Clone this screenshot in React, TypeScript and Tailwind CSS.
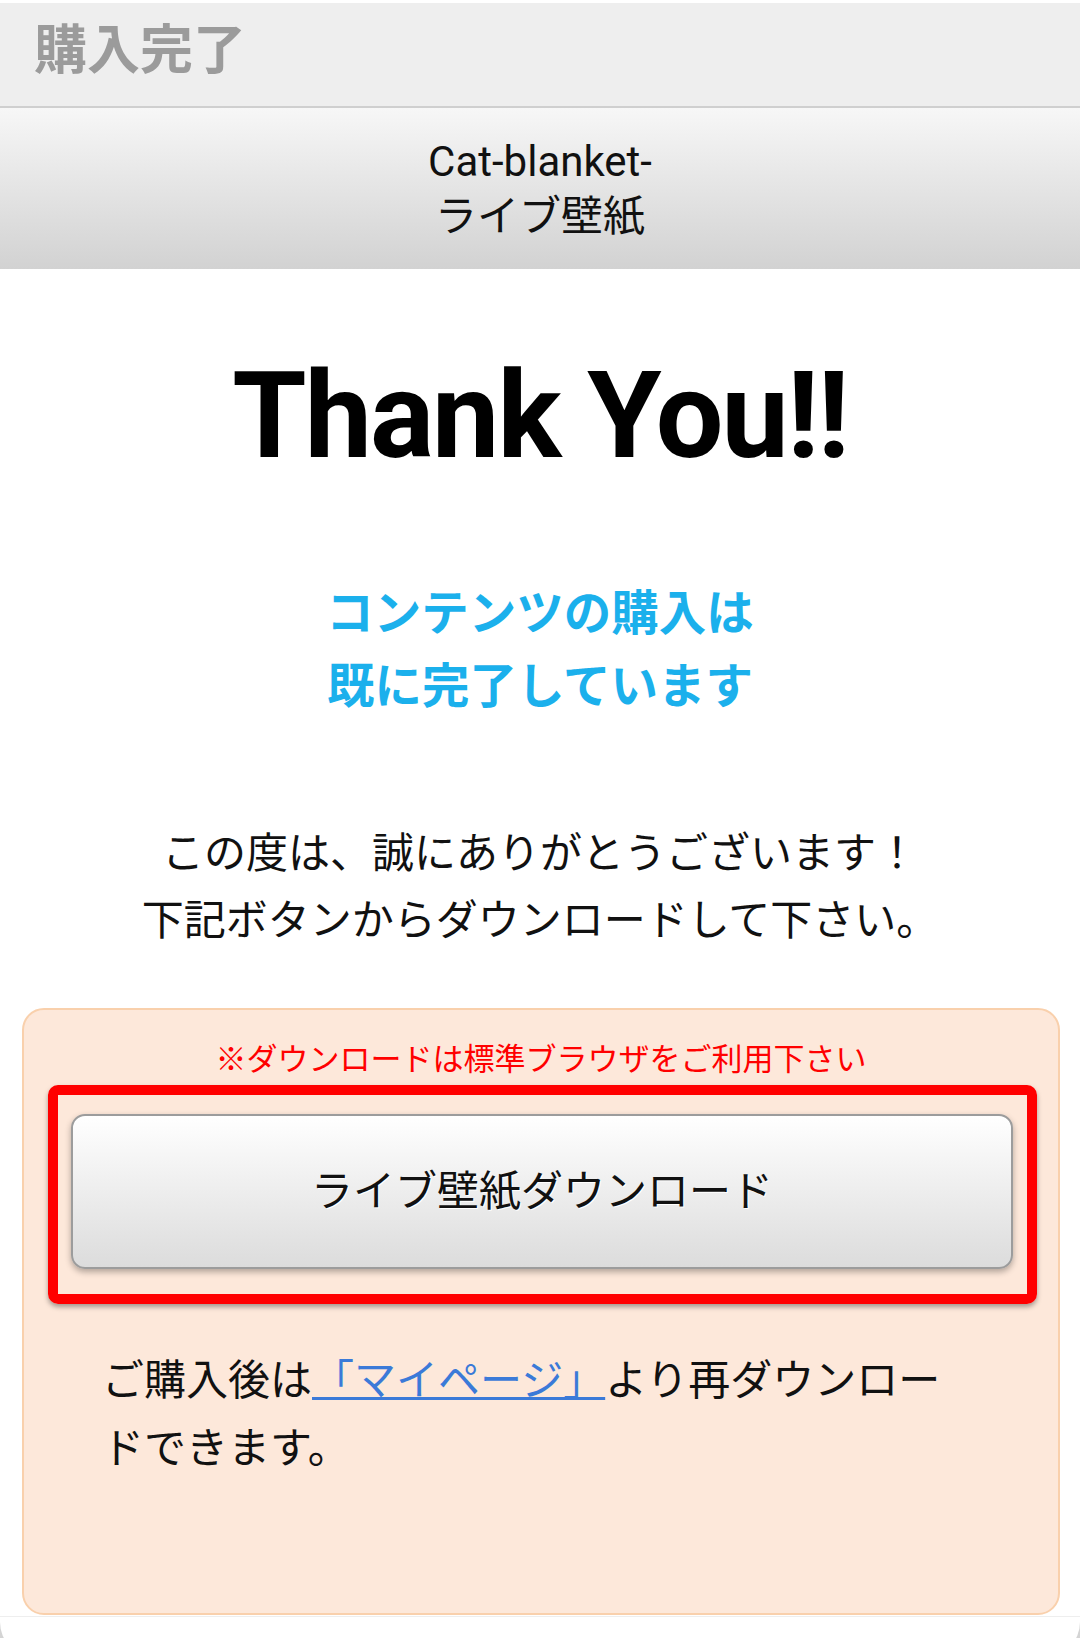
import React from "react";

function Header() {
  return (
    <div className="pt-[3px] bg-white">
      <div className="h-[105px] bg-[#eeeeee] flex items-center pl-[34px] pb-[6px] border-b-2 border-[#cfcfcf]">
        <h1 className="text-[53px] leading-none font-bold text-[#9b9b9b]">購入完了</h1>
      </div>
      <div className="h-[161px] bg-gradient-to-b from-[#f7f7f7] to-[#d2d2d2] flex flex-col items-center justify-center text-[42px] leading-[55px] text-[#111]">
        <p>Cat-blanket-</p>
        <p>ライブ壁紙</p>
      </div>
    </div>
  );
}

function DownloadBox() {
  return (
    <div className="ml-[22px] mr-[20px] mt-[54px] border-2 border-[#f9d0ac] bg-[#fde8da] rounded-[22px] pt-[27px] pb-[130px]">
      <p className="text-center text-[31px] leading-[45px] text-[#ff0000]">
        ※ダウンロードは標準ブラウザをご利用下さい
      </p>
      <div className="mt-[3px] ml-[24px] mr-[21px] border-[10px] border-[#ff0000] rounded-[10px] pt-[19px] pl-[13px] pr-[14px] pb-[25px] shadow-[0_3px_5px_rgba(0,0,0,0.35)]">
        <button className="w-full h-[155px] border-2 border-[#9c9c9c] rounded-[14px] bg-gradient-to-b from-white to-[#dcdcdc] shadow-[0_3px_6px_rgba(0,0,0,0.3)] text-[42px] text-[#111] [text-shadow:1px_1px_0_#fff]">
          ライブ壁紙ダウンロード
        </button>
      </div>
      <p className="mt-[43px] pl-[78px] pr-[98px] text-[42px] leading-[68px] text-[#111]">
        ご購入後は
        <a href="#" className="text-[#3b7ad8] underline decoration-[3px]">
          「マイページ」
        </a>
        より再ダウンロードできます。
      </p>
    </div>
  );
}

export default function App() {
  return (
    <div className="w-[1080px] min-h-[1638px] bg-white font-['Roboto','Noto_Sans_CJK_JP',sans-serif]">
      <Header />
      <h2 className="mt-[87px] text-center text-[120px] leading-[120px] font-bold tracking-[-2px] text-black">
        Thank You!!
      </h2>
      <div className="mt-[102px] text-center text-[47.5px] leading-[73px] font-bold text-[#1bb0ec]">
        <p>コンテンツの購入は</p>
        <p>既に完了しています</p>
      </div>
      <div className="mt-[96px] text-center text-[42px] leading-[67px] text-[#111]">
        <p>この度は、誠にありがとうございます！</p>
        <p>下記ボタンからダウンロードして下さい。</p>
      </div>
      <DownloadBox />
      <div className="mt-[1px] border-t border-[#eeeeee] h-[23px] bg-[#d4d4d4] overflow-hidden">
        <div className="h-[40px] bg-white rounded-b-[35px]" />
      </div>
    </div>
  );
}
